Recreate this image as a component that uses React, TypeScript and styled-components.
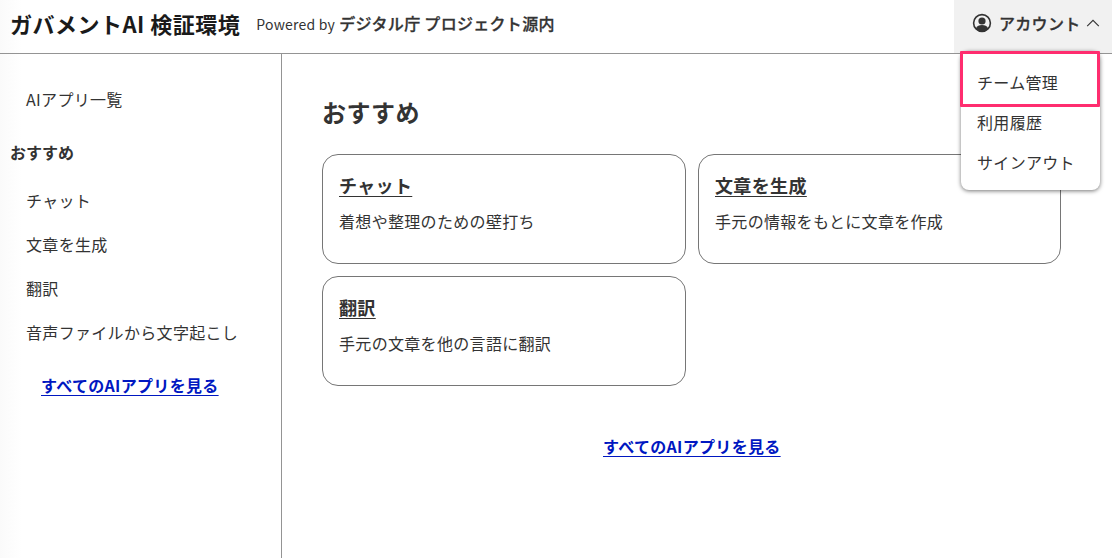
import { createGlobalStyle } from "styled-components";
import styled from "styled-components";

const GlobalStyle = createGlobalStyle`
  html, body {
    margin: 0;
    padding: 0;
    height: 100%;
    background: #fff;
    overflow: hidden;
  }
  body {
    font-family: "Noto Sans CJK JP", "Noto Sans", sans-serif;
    color: #333;
  }
`;

const Page = styled.div`
  width: 1112px;
  height: 558px;
  display: flex;
  flex-direction: column;
  position: relative;
`;

const Header = styled.header`
  height: 53px;
  display: flex;
  align-items: stretch;
  justify-content: space-between;
  border-bottom: 1px solid #949494;
  background: linear-gradient(90deg, #fafafa 0, #fff 22px);
`;

const Brand = styled.div`
  display: flex;
  align-items: center;
  padding: 0 0 8px 10px;
  gap: 16px;
`;

const Title = styled.span`
  font-size: 22px;
  font-weight: 700;
  color: #1a1a1a;
  letter-spacing: 0.5px;
`;

const PoweredBy = styled.span`
  font-size: 14px;
  color: #333;
  letter-spacing: 0.2px;

  b {
    margin-left: 1px;
    font-size: 16px;
    font-weight: 500;
    letter-spacing: 0.3px;
    -webkit-text-stroke: 0.3px #333;
  }
`;

const AccountButton = styled.button`
  width: 158px;
  border: 0;
  padding: 0 0 8px 18px;
  background: #f1f1f1;
  display: flex;
  align-items: center;
  gap: 7px;
  font-family: inherit;
  font-size: 16px;
  font-weight: 500;
  color: #333;
  letter-spacing: 0.3px;
  -webkit-text-stroke: 0.3px #333;
`;

const Menu = styled.ul`
  position: absolute;
  top: 51px;
  left: 961px;
  width: 139px;
  height: 139px;
  margin: 0;
  padding: 0;
  list-style: none;
  background: #fff;
  border-radius: 8px;
  box-shadow: 0 1px 4px rgba(0, 0, 0, 0.55);
  z-index: 2;
`;

const MenuItem = styled.li<{ $focused?: boolean }>`
  height: ${(p) => (p.$focused ? "52px" : "40px")};
  display: flex;
  align-items: center;
  box-sizing: border-box;
  padding: ${(p) => (p.$focused ? "10px 0 0 16px" : "0 0 2px 16px")};
  font-size: 16px;
  letter-spacing: 0.32px;
  color: #333;
  position: relative;

  ${(p) =>
    p.$focused &&
    `&::after {
      content: "";
      position: absolute;
      top: 0;
      left: -1px;
      right: 0;
      height: 56px;
      box-sizing: border-box;
      border: 3px solid #ff2d6f;
      border-radius: 1px;
    }`}
`;

const Body = styled.div`
  flex: 1;
  display: flex;
  min-height: 0;
`;

const Sidebar = styled.aside`
  width: 281px;
  flex-shrink: 0;
  border-right: 1px solid #949494;
  padding-top: 23px;
  background: linear-gradient(90deg, #fafafa 0, #fff 22px);
`;

const SideLink = styled.div`
  height: 44px;
  display: flex;
  align-items: center;
  padding-left: 26px;
  font-size: 16px;
  letter-spacing: 0.32px;
  color: #333;
`;

const SideHeading = styled.div`
  padding-left: 10px;
  margin: 9px 0 4px;
  height: 44px;
  display: flex;
  align-items: center;
  font-size: 16px;
  font-weight: 700;
  color: #333;
`;

const MoreLink = styled.a`
  font-size: 16px;
  font-weight: 700;
  color: #0017c1;
  letter-spacing: 0.32px;
  text-decoration: underline;
  text-underline-offset: 3px;
  cursor: pointer;
`;

const SideMore = styled.div`
  padding: 19px 0 0 41px;
`;

const Main = styled.main`
  flex: 1;
  padding: 40px 51px 0 40px;
`;

const Heading = styled.h2`
  margin: 0 0 24px;
  font-size: 24px;
  line-height: 36px;
  font-weight: 700;
  color: #333;
  letter-spacing: 0.5px;
`;

const CardGrid = styled.div`
  display: grid;
  grid-template-columns: 364px 363px;
  grid-auto-rows: 110px;
  gap: 12px;
`;

const Card = styled.div`
  border: 1px solid #767676;
  border-radius: 16px;
  box-sizing: border-box;
  padding: 15px 16px;
`;

const CardTitle = styled.a`
  display: inline-block;
  font-size: 18px;
  line-height: 30px;
  font-weight: 700;
  color: #333;
  text-decoration: underline;
  text-underline-offset: 3px;
  letter-spacing: 0.36px;
`;

const CardText = styled.p`
  margin: 9px 0 0;
  font-size: 16px;
  line-height: 24px;
  letter-spacing: 0.32px;
  color: #333;
`;

const MainMore = styled.div`
  margin-top: 48px;
  padding-left: 281px;
`;

const cards = [
  { title: "チャット", text: "着想や整理のための壁打ち" },
  { title: "文章を生成", text: "手元の情報をもとに文章を作成" },
  { title: "翻訳", text: "手元の文章を他の言語に翻訳" },
];

const AccountIcon = () => (
  <svg width="20" height="20" viewBox="0 0 20 20" fill="none" style={{ flexShrink: 0 }}>
    <circle cx="10" cy="10" r="8.4" stroke="#333" strokeWidth="1.6" />
    <circle cx="10" cy="8" r="3.6" fill="#333" />
    <path d="M3.8 15.4c1.2-2.4 3.4-3.4 6.2-3.4s5 1 6.2 3.4C14.6 17.6 12.4 18.6 10 18.6s-4.6-1-6.2-3.2z" fill="#333" />
  </svg>
);

const ChevronUp = () => (
  <svg width="16" height="16" viewBox="0 0 16 16" fill="none" style={{ marginLeft: -3, flexShrink: 0 }}>
    <path d="M2.2 11.2 8 5.4l5.8 5.8" stroke="#333" strokeWidth="1.1" />
  </svg>
);

export default function App() {
  return (
    <Page>
      <GlobalStyle />
      <Header>
        <Brand>
          <Title>ガバメントAI 検証環境</Title>
          <PoweredBy>
            Powered by <b>デジタル庁 プロジェクト源内</b>
          </PoweredBy>
        </Brand>
        <AccountButton>
          <AccountIcon />
          アカウント
          <ChevronUp />
        </AccountButton>
      </Header>
      <Menu>
        <MenuItem $focused>チーム管理</MenuItem>
        <MenuItem>利用履歴</MenuItem>
        <MenuItem>サインアウト</MenuItem>
      </Menu>
      <Body>
        <Sidebar>
          <SideLink>AIアプリ一覧</SideLink>
          <SideHeading>おすすめ</SideHeading>
          <SideLink>チャット</SideLink>
          <SideLink>文章を生成</SideLink>
          <SideLink>翻訳</SideLink>
          <SideLink>音声ファイルから文字起こし</SideLink>
          <SideMore>
            <MoreLink>すべてのAIアプリを見る</MoreLink>
          </SideMore>
        </Sidebar>
        <Main>
          <Heading>おすすめ</Heading>
          <CardGrid>
            {cards.map((card) => (
              <Card key={card.title}>
                <CardTitle>{card.title}</CardTitle>
                <CardText>{card.text}</CardText>
              </Card>
            ))}
          </CardGrid>
          <MainMore>
            <MoreLink>すべてのAIアプリを見る</MoreLink>
          </MainMore>
        </Main>
      </Body>
    </Page>
  );
}
